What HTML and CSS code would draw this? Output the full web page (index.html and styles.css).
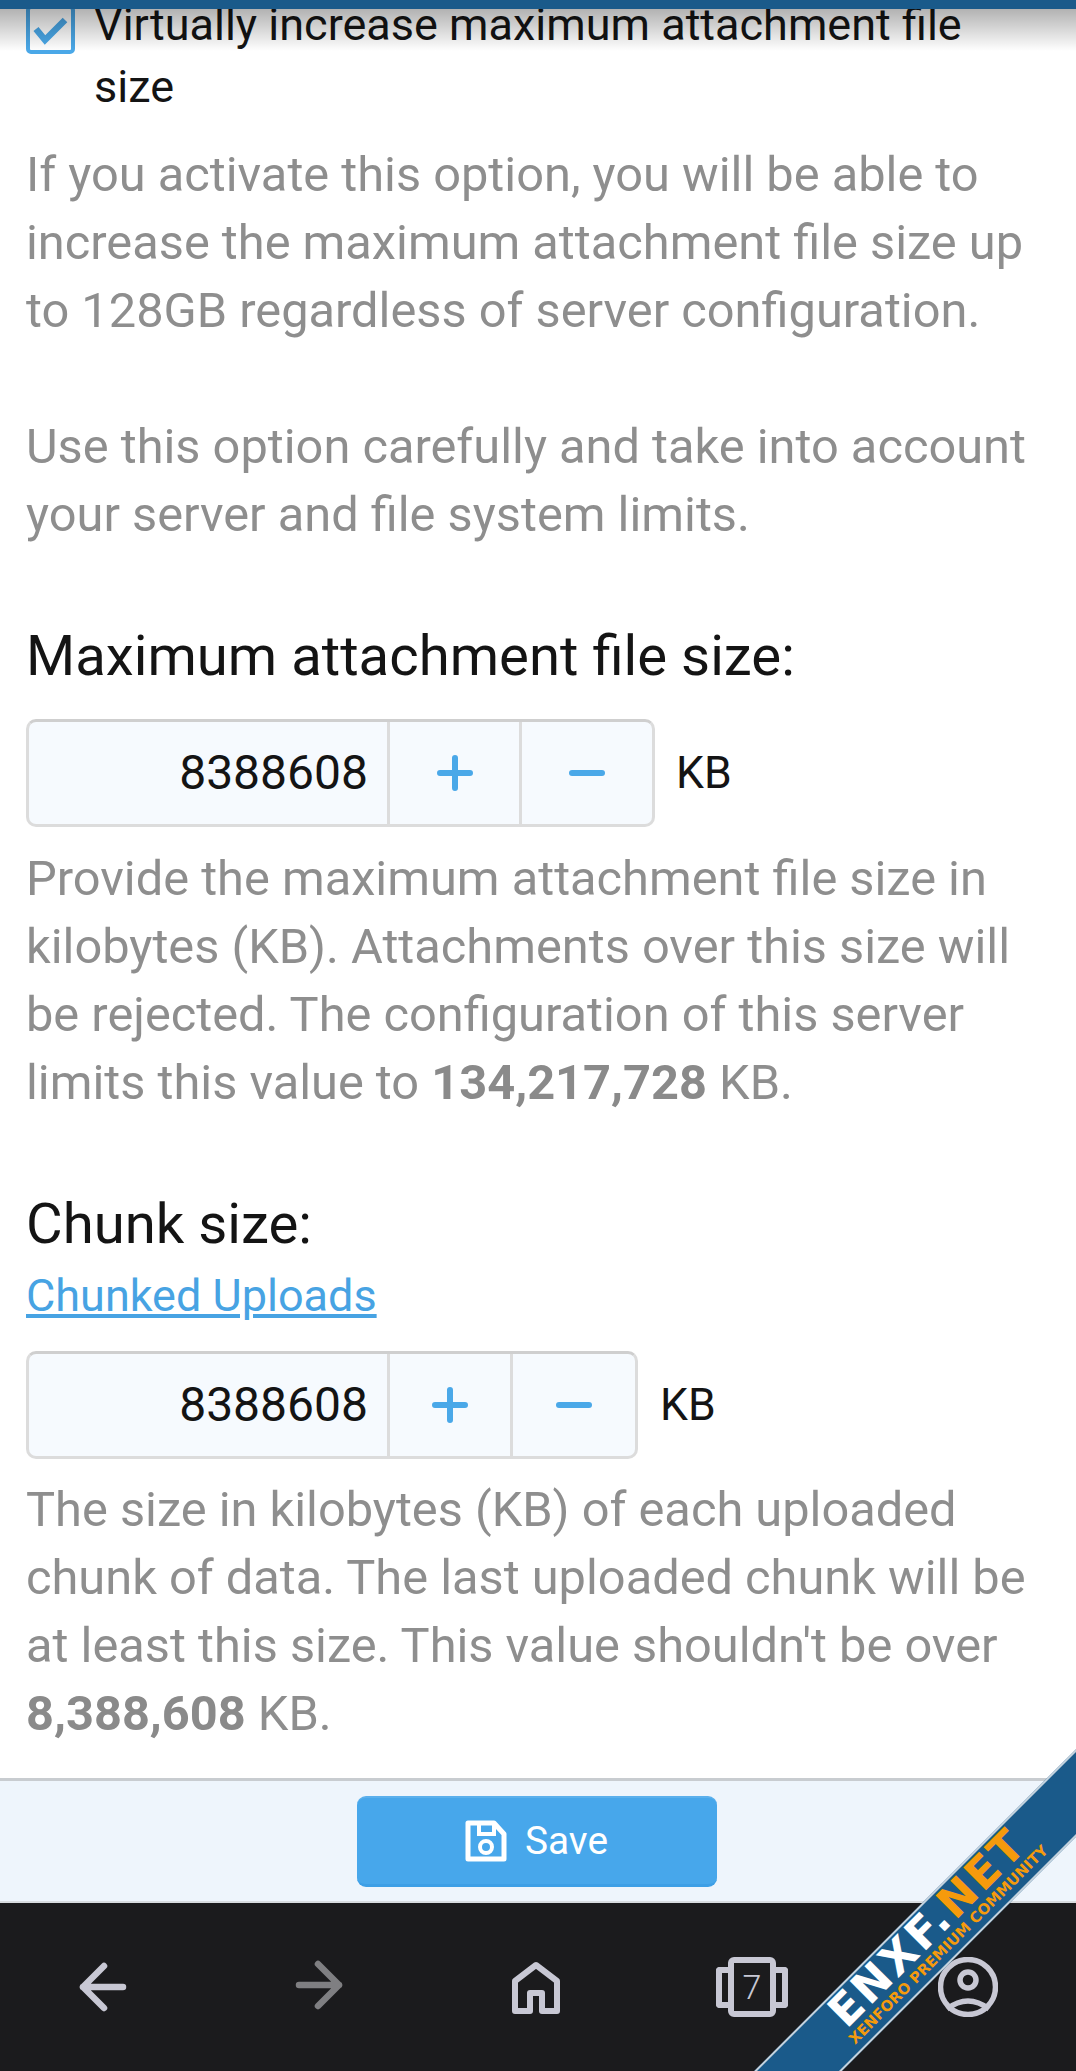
FILE: index.html
```html
<!DOCTYPE html>
<html lang="en">
<head>
    <meta charset="UTF-8">
    <meta name="viewport" content="width=device-width, initial-scale=1.0">
    <title>Attachment Options</title>
    <link rel="stylesheet" href="styles.css">
</head>
<body>
    <div class="page">
        <div class="top-bar"></div>

        <div class="options">
            <label class="check-row">
                <span class="check-box">
                    <svg viewBox="0 0 41 41" width="41" height="41"><path d="M6 20 L15 31 L35 11" fill="none" stroke="#4aa8e8" stroke-width="6.5"/></svg>
                </span>
                <span class="check-label">Virtually increase maximum attachment file size</span>
            </label>
            <p class="hint hint-first">If you activate this option, you will be able to increase the maximum attachment file size up to 128GB regardless of server configuration.<br><br>Use this option carefully and take into account your server and file system limits.</p>

            <h2 class="option-title">Maximum attachment file size:</h2>
            <div class="number-row">
                <div class="number-box">
                    <div class="number-value">8388608</div>
                    <button class="spin-button" type="button"><svg viewBox="0 0 36 36" width="36" height="36"><path d="M18 3 V33 M3 18 H33" stroke="#4aa8e8" stroke-width="6" stroke-linecap="round"/></svg></button>
                    <button class="spin-button" type="button"><svg viewBox="0 0 36 36" width="36" height="36"><path d="M3 18 H33" stroke="#4aa8e8" stroke-width="6" stroke-linecap="round"/></svg></button>
                </div>
                <span class="number-unit">KB</span>
            </div>
            <p class="hint">Provide the maximum attachment file size in kilobytes (KB). Attachments over this size will be rejected. The configuration of this server limits this value to <b>134,217,728</b> KB.</p>

            <h2 class="option-title">Chunk size:</h2>
            <a class="option-link" href="#">Chunked Uploads</a>
            <div class="number-row number-row-tight">
                <div class="number-box">
                    <div class="number-value">8388608</div>
                    <button class="spin-button spin-narrow" type="button"><svg viewBox="0 0 36 36" width="36" height="36"><path d="M18 3 V33 M3 18 H33" stroke="#4aa8e8" stroke-width="6" stroke-linecap="round"/></svg></button>
                    <button class="spin-button spin-narrow" type="button"><svg viewBox="0 0 36 36" width="36" height="36"><path d="M3 18 H33" stroke="#4aa8e8" stroke-width="6" stroke-linecap="round"/></svg></button>
                </div>
                <span class="number-unit">KB</span>
            </div>
            <p class="hint hint-last">The size in kilobytes (KB) of each uploaded chunk of data. The last uploaded chunk will be at least this size. This value shouldn't be over <b>8,388,608</b> KB.</p>
        </div>

        <div class="form-footer">
            <button class="save-button" type="button">
                <svg viewBox="0 0 42 42" width="42" height="42"><path d="M3 3 H29 L39 14 V39 H3 Z" fill="none" stroke="#fff" stroke-width="5" stroke-linejoin="round"/><path d="M14 3 V14 H29 V3" fill="none" stroke="#fff" stroke-width="4"/><circle cx="21" cy="27" r="6" fill="none" stroke="#fff" stroke-width="4"/></svg>
                <span>Save</span>
            </button>
        </div>

        <nav class="browser-nav">
            <svg class="nav-icon" viewBox="0 0 60 60" width="60" height="60"><path d="M9 30 H49 M30 9 L9 30 L30 51" fill="none" stroke="#c8c8d4" stroke-width="6.5" stroke-linecap="round" stroke-linejoin="round"/></svg>
            <svg class="nav-icon nav-icon-off" viewBox="0 0 60 60" width="60" height="60"><path d="M9 30 H49 M28 9 L49 30 L28 51" fill="none" stroke="#7f7f82" stroke-width="6.5" stroke-linecap="round" stroke-linejoin="round"/></svg>
            <svg class="nav-icon" viewBox="0 0 60 60" width="60" height="60"><path d="M24 54 V36 H36 V54 H51 V24 L30 8 L9 24 V54 Z" fill="none" stroke="#c8c8d4" stroke-width="6" stroke-linejoin="round"/></svg>
            <div class="tab-count">
                <span class="tab-side"></span>
                <span class="tab-number">7</span>
                <span class="tab-side"></span>
            </div>
            <svg class="nav-icon" viewBox="0 0 60 60" width="60" height="60"><circle cx="30" cy="30" r="27.5" fill="none" stroke="#c8c8d4" stroke-width="5.5"/><circle cx="30" cy="23" r="8" fill="none" stroke="#c8c8d4" stroke-width="5.5"/><path d="M9 52 Q30 36 51 52" fill="none" stroke="#c8c8d4" stroke-width="5.5"/></svg>
        </nav>

        <div class="ribbon">
            <div class="ribbon-name">ENXF.<span class="ribbon-accent">NET</span></div>
            <div class="ribbon-tag">XENFORO PREMIUM COMMUNITY</div>
        </div>
    </div>
</body>
</html>
```

FILE: styles.css
```css
* {
    box-sizing: border-box;
}
body {
    margin: 0;
    font-family: Roboto, "Liberation Sans", sans-serif;
    background-color: #fff;
}
.page {
    position: relative;
    display: flex;
    flex-direction: column;
    height: 2071px;
    overflow: hidden;
}
.top-bar {
    position: absolute;
    top: 0;
    left: 0;
    right: 0;
    height: 9px;
    background-color: #1a5a8a;
}
.top-bar::after {
    content: "";
    position: absolute;
    top: 9px;
    left: 0;
    right: 0;
    height: 42px;
    background: linear-gradient(rgba(0,0,0,0.3), rgba(0,0,0,0));
}
.options {
    flex: 1;
    margin-top: -6px;
    padding: 0 26px;
}
.check-row {
    display: flex;
    gap: 19px;
}
.check-box {
    flex: none;
    width: 49px;
    height: 49px;
    margin-top: 11px;
    border: 4px solid #4aa8e8;
    border-radius: 5px;
    background-color: #fff;
}
.check-box svg {
    display: block;
}
.check-label {
    font-size: 45px;
    line-height: 62px;
    color: #141414;
}
.hint {
    margin: 18px 0 0;
    font-size: 48.75px;
    line-height: 68px;
    color: #8e8e8e;
}
.hint-first {
    margin-top: 23px;
}
.hint-last {
    margin-top: 17px;
}
.hint b {
    font-weight: 700;
    color: #8a8a8a;
}
.option-title {
    margin: 73px 0 0;
    font-size: 56.3px;
    font-weight: 400;
    line-height: 68px;
    color: #141414;
}
.option-link {
    display: block;
    margin-top: 4px;
    font-size: 45px;
    line-height: 68px;
    color: #47a3e3;
}
.number-row {
    display: flex;
    align-items: center;
    gap: 21px;
    margin-top: 29px;
}
.number-row-tight {
    gap: 22px;
    margin-top: 21px;
}
.number-box {
    display: flex;
    height: 108px;
    background-color: #f6fafe;
    border: 3px solid #dcdcdc;
    border-top-color: #cfcfcf;
    border-radius: 10px;
}
.number-value {
    width: 358px;
    padding-right: 19px;
    font-size: 48px;
    line-height: 102px;
    text-align: right;
    color: #141414;
}
.spin-button {
    display: flex;
    align-items: center;
    justify-content: center;
    width: 132px;
    padding: 0;
    background: none;
    border: none;
    border-left: 3px solid #dcdcdc;
}
.spin-button:last-child {
    width: 133px;
}
.spin-narrow {
    width: 123px;
}
.spin-narrow:last-child {
    width: 125px;
}
.number-unit {
    font-size: 44.5px;
    color: #141414;
}
.form-footer {
    display: flex;
    justify-content: center;
    align-items: center;
    flex: none;
    height: 125px;
    padding-right: 3px;
    background-color: #eef5fc;
    border-top: 3px solid #c8ccd0;
    border-bottom: 2px solid #d8dcdf;
}
.save-button {
    display: flex;
    align-items: center;
    justify-content: center;
    gap: 18px;
    width: 360px;
    height: 91px;
    padding: 0;
    font-family: inherit;
    font-size: 38.8px;
    color: #fff;
    background-color: #47a7eb;
    border: none;
    border-top: 2px solid #5bb0ec;
    border-bottom: 3px solid #3d9fe6;
    border-radius: 9px;
}
.browser-nav {
    display: grid;
    grid-template-columns: repeat(5, 216px);
    justify-items: center;
    align-items: center;
    flex: none;
    height: 168px;
    margin-left: -4px;
    background-color: #1b1b1d;
}
.nav-icon {
    display: block;
}
.nav-icon-off {
    margin-top: -4px;
}
.tab-count {
    display: flex;
    align-items: center;
    height: 60px;
}
.tab-number {
    width: 48px;
    height: 60px;
    font-size: 34px;
    font-weight: 300;
    line-height: 48px;
    text-align: center;
    color: #c8c8d4;
    border: 6px solid #c8c8d4;
    border-radius: 6px;
}
.tab-side {
    width: 12px;
    height: 41px;
    border: 6px solid #c8c8d4;
    border-radius: 4px 0 0 4px;
    border-right: none;
}
.tab-number + .tab-side {
    border: 6px solid #c8c8d4;
    border-left: none;
    border-radius: 0 4px 4px 0;
}
.ribbon {
    position: absolute;
    left: 630px;
    top: 1908px;
    width: 600px;
    height: 62px;
    padding-left: 12px;
    text-align: center;
    background-color: #1a5a8a;
    border-top: 2px solid #c5d3de;
    border-bottom: 2px solid #c5d3de;
    transform: rotate(-45deg);
}
.ribbon-name {
    font-family: "DejaVu Sans", sans-serif;
    font-size: 44px;
    font-weight: 700;
    line-height: 38px;
    letter-spacing: 2.5px;
    color: #fff;
}
.ribbon-accent {
    color: #f59a0c;
}
.ribbon-tag {
    padding-left: 6px;
    font-family: "DejaVu Sans", sans-serif;
    font-size: 14.8px;
    font-weight: 700;
    line-height: 16px;
    color: #f59a0c;
}
```
